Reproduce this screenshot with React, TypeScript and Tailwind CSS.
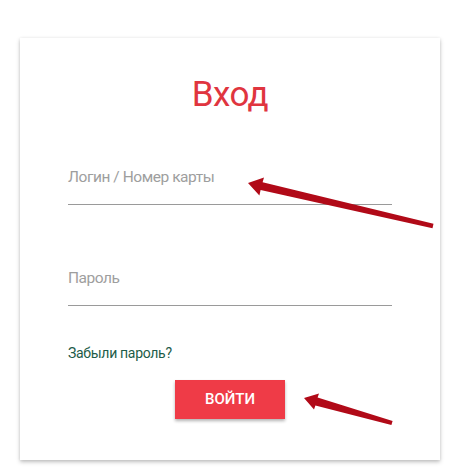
import React from 'react';

function Field({ label }: { label: string }) {
  return (
    <div className="border-b border-[#9a9a9a] pb-[15px]">
      <div className="text-[15.5px] leading-[24px] tracking-[-0.45px] text-[#9e9e9e]">{label}</div>
    </div>
  );
}

function Arrows() {
  return (
    <svg className="pointer-events-none absolute left-0 top-0" width="463" height="470" viewBox="0 0 463 470">
      <polygon
        fill="#b10a18"
        points="248,183 264,177.5 262.6,182.3 433.5,223.8 432.5,228.2 260.6,190.1 259.4,195.5"
      />
      <polygon
        fill="#b10a18"
        points="304,398 319,393.5 317.6,397.6 392.6,420.9 391.4,425.1 315.4,405.4 314,409.5"
      />
    </svg>
  );
}

export default function App() {
  return (
    <div className="relative h-[470px] w-[463px] bg-white pt-[38px] pl-[20px]" style={{ fontFamily: 'Roboto, "Noto Sans", sans-serif' }}>
      <div className="w-[420px] bg-white px-[48px] pt-[39px] pb-[41px] shadow-[0_2px_4px_rgba(0,0,0,0.25),0_0_3px_rgba(0,0,0,0.06)]">
        <h1 className="text-center text-[35px] leading-[36px] tracking-[-0.6px] text-[#e0353f]">Вход</h1>
        <div className="mt-[52px]">
          <Field label="Логин / Номер карты" />
        </div>
        <div className="mt-[61px]">
          <Field label="Пароль" />
        </div>
        <a href="#" className="mt-[37px] block text-[14px] leading-[20px] tracking-[-0.3px] text-[#1d5c48]">
          Забыли пароль?
        </a>
        <div className="mt-[17px] flex justify-center">
          <button className="h-[39px] w-[110px] bg-[#ef3b47] text-[15px] font-medium text-white shadow-[0_2px_3px_rgba(0,0,0,0.3)]">
            ВОЙТИ
          </button>
        </div>
      </div>
      <Arrows />
    </div>
  );
}
